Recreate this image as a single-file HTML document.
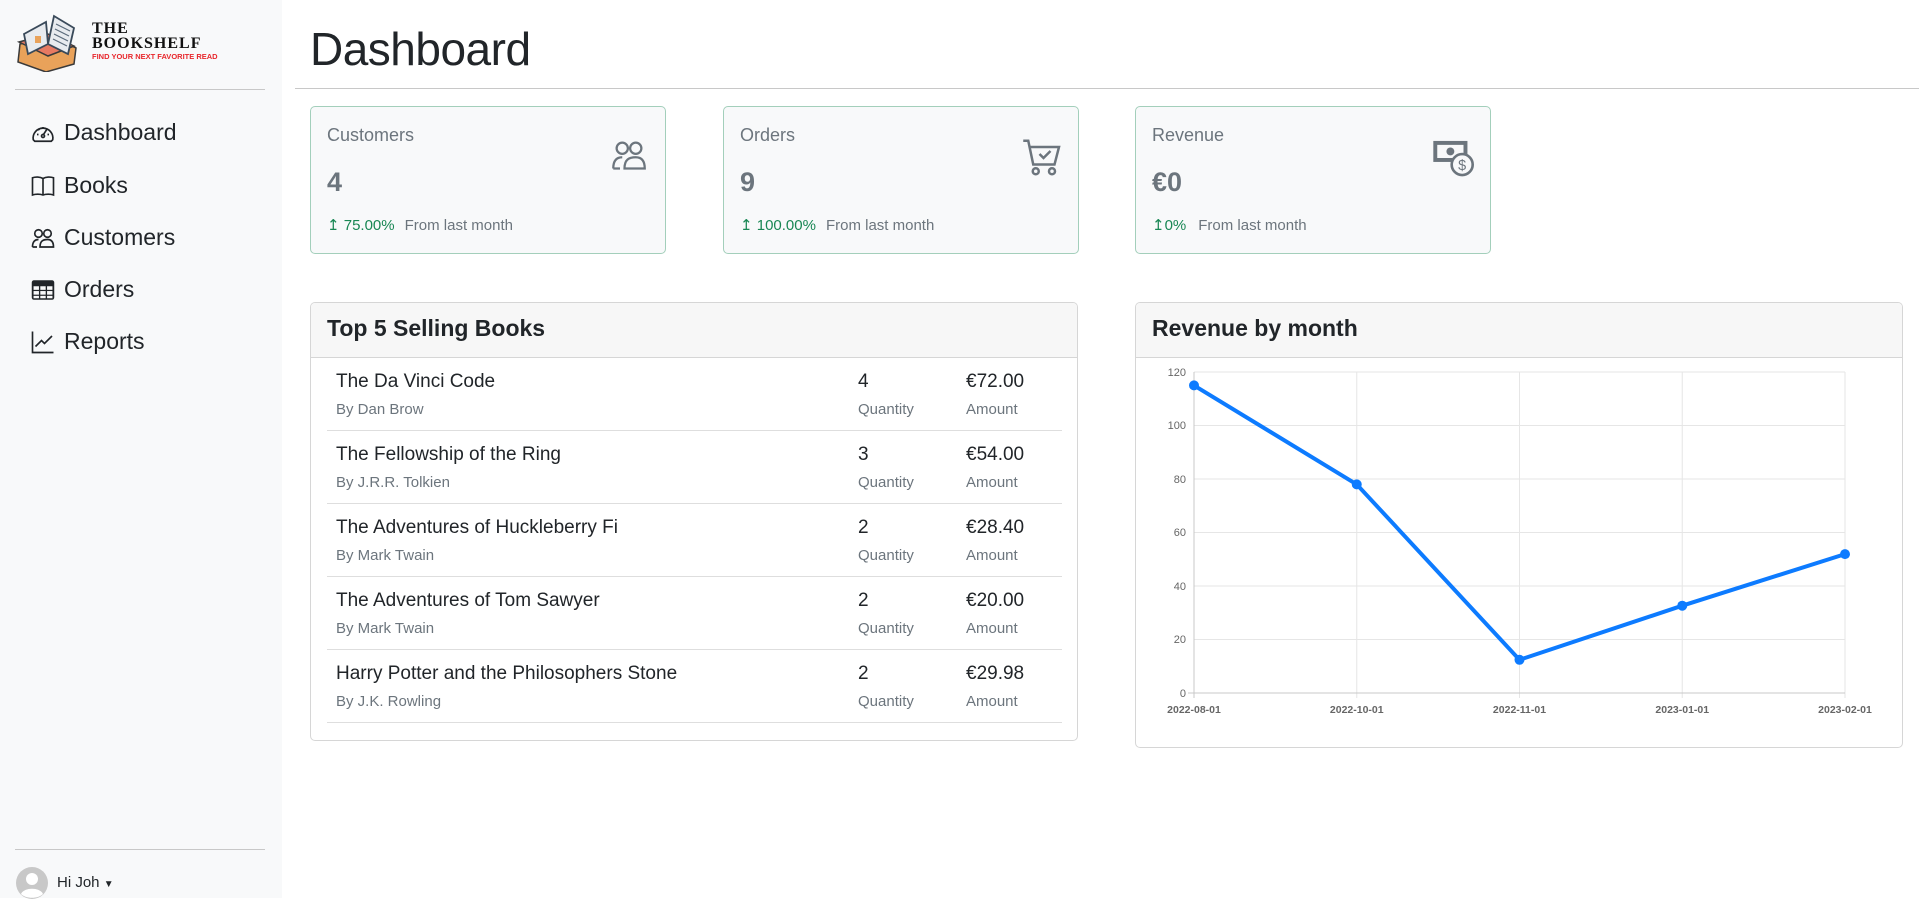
<!DOCTYPE html>
<html><head><meta charset="utf-8"><style>
*{box-sizing:border-box;margin:0;padding:0}
body{width:1919px;height:898px;overflow:hidden;background:#fff;font-family:"Liberation Sans",sans-serif;color:#212529;position:relative}
.side{position:absolute;left:0;top:0;width:282px;height:898px;background:#f8f9fa}
.abs{position:absolute}
.nav{position:absolute;left:31px;font-size:23px;color:#212529;display:flex;align-items:center}
.nav svg{width:24px;height:24px;margin-right:9px}
.card{position:absolute;background:#f8f9fa;border:1px solid #a3cfbb;border-radius:5px}
.card .lbl{position:absolute;left:16px;top:18px;font-size:18px;color:#6c757d}
.card .val{position:absolute;left:16px;top:60px;font-size:27px;color:#6c757d;font-weight:bold}
.card .ft{position:absolute;left:16px;top:109px;font-size:15px;color:#6c757d;white-space:nowrap}
.card .ft b{color:#198754;font-weight:normal;margin-right:10px}
.card svg{position:absolute;right:16px;top:30px}
.panel{position:absolute;border:1px solid #d6d6d6;border-radius:5px;background:#fff;overflow:hidden}
.panel .hd{height:55px;background:#f7f7f7;border-bottom:1px solid #d6d6d6;font-size:23px;font-weight:bold;padding:12px 16px;color:#212529}
.row{position:absolute;left:16px;width:735px;height:73px;border-bottom:1px solid #dedede}
.row .t{position:absolute;left:9px;top:13px;font-size:19px}
.row .s{position:absolute;left:9px;top:43px;font-size:15px;color:#6c757d}
.row .q{position:absolute;left:531px;top:13px;font-size:19px}
.row .qs{position:absolute;left:531px;top:43px;font-size:15px;color:#6c757d}
.row .a{position:absolute;left:639px;top:13px;font-size:19px}
.row .as{position:absolute;left:639px;top:43px;font-size:15px;color:#6c757d}
</style></head><body>
<div class="side">
  <svg class="abs" style="left:16px;top:14px" width="64" height="58" viewBox="0 0 64 58">
    <path d="M4 30 L34 22 L60 34 L58 50 L30 58 L2 48 Z" fill="#e9a25a" stroke="#3a3a3a" stroke-width="1.5"/>
    <path d="M3 28 L32 20 L58 32 L32 42 Z" fill="#e77a62" stroke="#3a3a3a" stroke-width="1.5"/>
    <path d="M8 20 L30 8 L32 30 L12 40 Z" fill="#e8ebef" stroke="#3a4a5a" stroke-width="1.8"/>
    <path d="M32 30 L38 2 L58 14 L52 40 Z" fill="#e8ebef" stroke="#3a4a5a" stroke-width="1.8"/>
    <rect x="19" y="22" width="6" height="7" fill="#e9a25a"/>
    <path d="M40 10 L54 17 M39 15 L53 22 M38 20 L52 27 M37 25 L51 32" stroke="#5a6a7a" stroke-width="1.2"/>
  </svg>
  <div class="abs" style="left:92px;top:21px;font-family:'Liberation Serif',serif;font-weight:bold;font-size:16px;letter-spacing:1px;line-height:15px;color:#111">THE<br>BOOKSHELF</div>
  <div class="abs" style="left:92px;top:52px;font-size:7.5px;font-weight:bold;color:#e8272c;white-space:nowrap">FIND YOUR NEXT FAVORITE READ</div>
  <div class="abs" style="left:15px;top:89px;width:250px;border-top:1px solid #c8c8c8"></div>
  <div class="nav" style="top:119px"><svg viewBox="0 0 16 16" fill="none" stroke="#212529" stroke-width="1.1"><path d="M1.5 12.5 A6.6 6.6 0 1 1 14.5 12.5 L13.5 13.5 H2.5 Z"/><path d="M8 9.5 L10.8 5.2"/><circle cx="8" cy="10" r="1"/><path d="M4 9h1M11 9h1M5 5.5l.6.6M8 4v1"/></svg>Dashboard</div>
  <div class="nav" style="top:172px"><svg viewBox="0 0 16 16" fill="none" stroke="#212529" stroke-width="1.1"><path d="M1 2.5 C3 1.8 6 1.8 8 3 C10 1.8 13 1.8 15 2.5 V14 C13 13.3 10 13.3 8 14 C6 13.3 3 13.3 1 14 Z M8 3 V14"/></svg>Books</div>
  <div class="nav" style="top:224px"><svg viewBox="0 0 16 16" fill="none" stroke="#212529" stroke-width="1.1"><circle cx="5" cy="5" r="2.5"/><circle cx="11" cy="5" r="2.5"/><path d="M1 14 C1 10 3 9 5 9 M6 14 C6 10 8 9 11 9 C14 9 15 11 15 14 Z M1 14 H4"/></svg>Customers</div>
  <div class="nav" style="top:276px"><svg viewBox="0 0 16 16"><rect x="0.5" y="1.5" width="15" height="13" rx="1.5" fill="#212529"/><g fill="#f8f9fa"><rect x="1.7" y="5.5" width="3.6" height="2.4"/><rect x="6.2" y="5.5" width="3.6" height="2.4"/><rect x="10.7" y="5.5" width="3.6" height="2.4"/><rect x="1.7" y="8.7" width="3.6" height="2.4"/><rect x="6.2" y="8.7" width="3.6" height="2.4"/><rect x="10.7" y="8.7" width="3.6" height="2.4"/><rect x="1.7" y="11.9" width="3.6" height="1.6"/><rect x="6.2" y="11.9" width="3.6" height="1.6"/><rect x="10.7" y="11.9" width="3.6" height="1.6"/></g></svg>Orders</div>
  <div class="nav" style="top:328px"><svg viewBox="0 0 16 16" fill="none" stroke="#212529" stroke-width="1.1"><path d="M1 1 V15 H15"/><path d="M3 11 L7 7 L9 9 L14 4"/></svg>Reports</div>
  <div class="abs" style="left:15px;top:849px;width:250px;border-top:1px solid #c8c8c8"></div>
  <svg class="abs" style="left:16px;top:867px" width="32" height="32" viewBox="0 0 32 32"><circle cx="16" cy="16" r="16" fill="#c8c8c8"/><circle cx="16" cy="12" r="6" fill="#fff"/><path d="M5 27 C8 20 24 20 27 27 C22 32 10 32 5 27Z" fill="#fff"/></svg>
  <div class="abs" style="left:57px;top:874px;font-size:15px">Hi Joh <span style="font-size:10px">▼</span></div>
</div>

<div class="abs" style="left:310px;top:22px;font-size:46px;font-weight:300;color:#212529;letter-spacing:-0.5px">Dashboard</div>
<div class="abs" style="left:295px;top:88px;width:1624px;border-top:1px solid #c8c8c8"></div>

<div class="card" style="left:310px;top:106px;width:356px;height:148px">
  <div class="lbl">Customers</div><div class="val">4</div>
  <div class="ft"><b>↥ 75.00%</b>From last month</div>
  <svg width="40" height="36" viewBox="0 0 16 16" fill="none" stroke="#6c757d" stroke-width="1"><circle cx="5" cy="5" r="2.5"/><circle cx="11" cy="5" r="2.5"/><path d="M1 14 C1 10 3 9 5 9 M6 14 C6 10 8 9 11 9 C14 9 15 11 15 14 Z M1 14 H4"/></svg>
</div>
<div class="card" style="left:723px;top:106px;width:356px;height:148px">
  <div class="lbl">Orders</div><div class="val">9</div>
  <div class="ft"><b>↥ 100.00%</b>From last month</div>
  <svg width="40" height="40" viewBox="0 0 16 16" fill="none" stroke="#6c757d" stroke-width="1"><path d="M0.5 1.5 H2.5 L4.5 11 H13 L14.8 4 H3.3"/><circle cx="5.5" cy="13.7" r="1.2"/><circle cx="12" cy="13.7" r="1.2"/><path d="M7 6.8 L8.6 8.4 L11.4 5.6"/></svg>
</div>
<div class="card" style="left:1135px;top:106px;width:356px;height:148px">
  <div class="lbl">Revenue</div><div class="val">€0</div>
  <div class="ft"><b style="margin-right:12px">↥0%</b>From last month</div>
  <svg width="42" height="42" viewBox="0 0 16 16"><rect x="0.5" y="1.5" width="13" height="8" fill="#6c757d"/><rect x="2" y="3" width="10" height="5" fill="#f8f9fa"/><circle cx="7" cy="5.5" r="1.5" fill="#6c757d"/><circle cx="11.5" cy="10.5" r="4" fill="#f8f9fa" stroke="#6c757d" stroke-width="1"/><text x="11.5" y="12.6" font-size="5.5" text-anchor="middle" fill="#6c757d" font-family="Liberation Sans">$</text></svg>
</div>

<div class="panel" style="left:310px;top:302px;width:768px;height:439px">
  <div class="hd">Top 5 Selling Books</div>
  <div class="row" style="top:55px"><div class="t">The Da Vinci Code</div><div class="s">By Dan Brow</div><div class="q">4</div><div class="qs">Quantity</div><div class="a">€72.00</div><div class="as">Amount</div></div>
  <div class="row" style="top:128px"><div class="t">The Fellowship of the Ring</div><div class="s">By J.R.R. Tolkien</div><div class="q">3</div><div class="qs">Quantity</div><div class="a">€54.00</div><div class="as">Amount</div></div>
  <div class="row" style="top:201px"><div class="t">The Adventures of Huckleberry Fi</div><div class="s">By Mark Twain</div><div class="q">2</div><div class="qs">Quantity</div><div class="a">€28.40</div><div class="as">Amount</div></div>
  <div class="row" style="top:274px"><div class="t">The Adventures of Tom Sawyer</div><div class="s">By Mark Twain</div><div class="q">2</div><div class="qs">Quantity</div><div class="a">€20.00</div><div class="as">Amount</div></div>
  <div class="row" style="top:347px"><div class="t">Harry Potter and the Philosophers Stone</div><div class="s">By J.K. Rowling</div><div class="q">2</div><div class="qs">Quantity</div><div class="a">€29.98</div><div class="as">Amount</div></div>
</div>

<div class="panel" style="left:1135px;top:302px;width:768px;height:446px">
  <div class="hd">Revenue by month</div>
</div>
<svg class="abs" style="left:0;top:0" width="1919" height="898" font-family="Liberation Sans" font-size="11" fill="#666">
  <g stroke="#e6e6e6" stroke-width="1">
    <line x1="1194" y1="372" x2="1845" y2="372"/><line x1="1194" y1="425.5" x2="1845" y2="425.5"/><line x1="1194" y1="479" x2="1845" y2="479"/><line x1="1194" y1="532.5" x2="1845" y2="532.5"/><line x1="1194" y1="586" x2="1845" y2="586"/><line x1="1194" y1="639.5" x2="1845" y2="639.5"/>
    <line x1="1356.75" y1="372" x2="1356.75" y2="698"/><line x1="1519.5" y1="372" x2="1519.5" y2="698"/><line x1="1682.25" y1="372" x2="1682.25" y2="698"/><line x1="1845" y1="372" x2="1845" y2="698"/>
  </g>
  <g stroke="#c8c8c8"><line x1="1194" y1="372" x2="1194" y2="698"/><line x1="1188" y1="693" x2="1845" y2="693"/></g>
  <g text-anchor="end"><text x="1186" y="376">120</text><text x="1186" y="429">100</text><text x="1186" y="483">80</text><text x="1186" y="536">60</text><text x="1186" y="590">40</text><text x="1186" y="643">20</text><text x="1186" y="697">0</text></g>
  <g text-anchor="middle" font-weight="bold" font-size="10.5"><text x="1194" y="713">2022-08-01</text><text x="1356.75" y="713">2022-10-01</text><text x="1519.5" y="713">2022-11-01</text><text x="1682.25" y="713">2023-01-01</text><text x="1845" y="713">2023-02-01</text></g>
  <polyline points="1194,385.4 1356.75,484.4 1519.5,659.8 1682.25,605.7 1845,554.1" fill="none" stroke="#0d7bff" stroke-width="4"/>
  <g fill="#0d7bff"><circle cx="1194" cy="385.4" r="5"/><circle cx="1356.75" cy="484.4" r="5"/><circle cx="1519.5" cy="659.8" r="5"/><circle cx="1682.25" cy="605.7" r="5"/><circle cx="1845" cy="554.1" r="5"/></g>
</svg>
</body></html>
